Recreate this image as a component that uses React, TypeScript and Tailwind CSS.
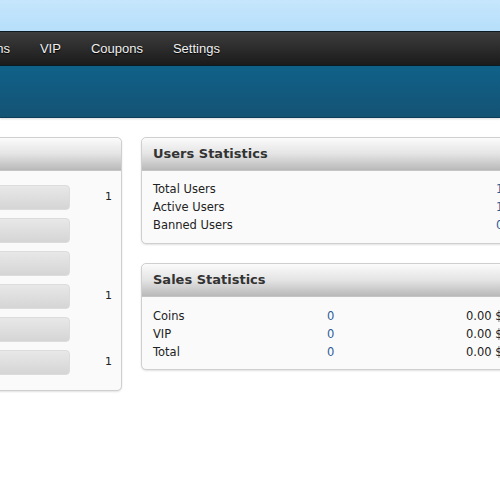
const navItems = ["Transactions", "VIP", "Coupons", "Settings"];

const bars = ["1", "", "", "1", "", "1"];

const users = [
  { label: "Total Users", value: "1" },
  { label: "Active Users", value: "1" },
  { label: "Banned Users", value: "0" },
];

const sales = [
  { label: "Coins", count: "0", amount: "0.00 $" },
  { label: "VIP", count: "0", amount: "0.00 $" },
  { label: "Total", count: "0", amount: "0.00 $" },
];

function PanelHeader({ title }: { title?: string }) {
  return (
    <div className="h-[33px] flex items-center px-[11px] rounded-t-[5px] border-b border-[#c4c4c4] bg-gradient-to-b from-[#fbfbfb] via-[#e4e4e4] to-[#b9b9b9]">
      {title && (
        <h3 className="text-[13px] font-bold text-[#333] font-['DejaVu_Sans',sans-serif]">{title}</h3>
      )}
    </div>
  );
}

export default function App() {
  return (
    <div className="w-[500px] h-[500px] overflow-hidden bg-white font-['DejaVu_Sans',sans-serif]">
      {/* top band */}
      <div className="h-[31px] bg-gradient-to-b from-[#c6e6fc] to-[#b6dffb]" />

      {/* nav */}
      <div className="h-[35px] border-t border-[#0e1a22] bg-gradient-to-b from-[#3d3d3d] to-[#1b1b1b] border-b border-b-[#0d1c24] overflow-hidden">
        <ul className="flex items-center h-full ml-[-79px] font-['Liberation_Sans',sans-serif] text-[13px] text-[#f0f0f0] [text-shadow:0_1px_1px_#000]">
          {navItems.map((item) => (
            <li key={item} className="px-[15px] whitespace-nowrap">
              {item}
            </li>
          ))}
        </ul>
      </div>

      {/* blue band */}
      <div className="h-[52px] bg-gradient-to-b from-[#0f6189] to-[#145374] border-b border-[#0e3e57] shadow-[0_1px_2px_rgba(0,0,0,0.15)]" />

      {/* content */}
      <div className="flex items-start gap-[19px] mt-[19px] ml-[-60px]">
        <div className="w-[182px] shrink-0 rounded-[5px] border border-[#cfcfcf] bg-[#fafafa] shadow-[0_1px_2px_rgba(0,0,0,0.12)]">
          <PanelHeader />
          <div className="pt-[14px] pb-[15px] flex flex-col gap-[8px]">
            {bars.map((v, i) => (
              <div key={i} className="flex items-center">
                <div className="ml-[20px] w-[109px] h-[25px] rounded-[4px] border border-[#dcdcdc] bg-gradient-to-b from-[#e8e8e8] to-[#d5d5d5]" />
                <span className="ml-[35px] text-[11px] text-[#222]">{v}</span>
              </div>
            ))}
          </div>
        </div>

        <div className="w-[420px] shrink-0 flex flex-col gap-[19px]">
          <div className="rounded-[5px] border border-[#cfcfcf] bg-[#fafafa] shadow-[0_1px_2px_rgba(0,0,0,0.12)]">
            <PanelHeader title="Users Statistics" />
            <div className="pt-[10px] pb-[8px] px-[11px] text-[11.5px] text-[#222]">
              {users.map((r) => (
                <div key={r.label} className="flex h-[18px] items-center">
                  <span className="w-[343px]">{r.label}</span>
                  <span className="text-[#2c5c97]">{r.value}</span>
                </div>
              ))}
            </div>
          </div>

          <div className="rounded-[5px] border border-[#cfcfcf] bg-[#fafafa] shadow-[0_1px_2px_rgba(0,0,0,0.12)]">
            <PanelHeader title="Sales Statistics" />
            <div className="pt-[11px] pb-[7px] px-[11px] text-[11.5px] text-[#222]">
              {sales.map((r) => (
                <div key={r.label} className="flex h-[18px] items-center">
                  <span className="w-[174px]">{r.label}</span>
                  <span className="w-[139px] text-[#2c5c97]">{r.count}</span>
                  <span>{r.amount}</span>
                </div>
              ))}
            </div>
          </div>
        </div>
      </div>
    </div>
  );
}
